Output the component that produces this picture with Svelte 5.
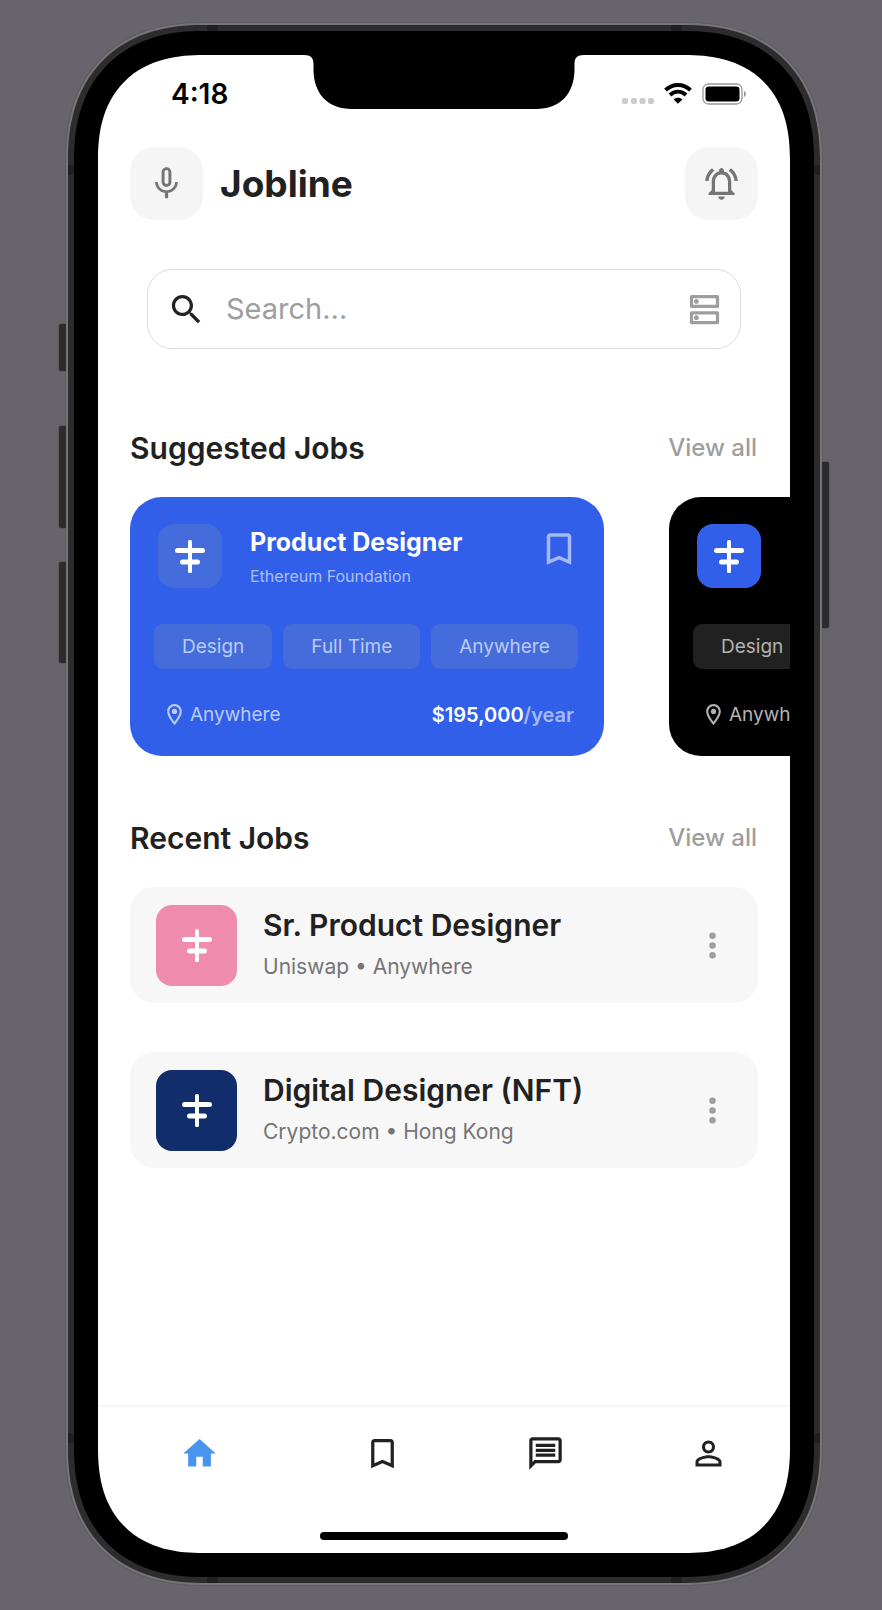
<script>
  const suggested = [
    { title: 'Product Designer', company: 'Ethereum Foundation', tags: ['Design', 'Full Time', 'Anywhere'], place: 'Anywhere', pay: '$195,000', theme: 'blue' },
    { title: 'Product Designer', company: 'Ethereum Foundation', tags: ['Design', 'Full Time', 'Anywhere'], place: 'Anywhere', pay: '$195,000', theme: 'black' }
  ];
  const recent = [
    { title: 'Sr. Product Designer', company: 'Uniswap', place: 'Anywhere', theme: 'pink' },
    { title: 'Digital Designer (NFT)', company: 'Crypto.com', place: 'Hong Kong', theme: 'navy' }
  ];
  const bookmark = 'M17 3H7c-1.1 0-1.99.9-1.99 2L5 21l7-3 7 3V5c0-1.1-.9-2-2-2zm0 15l-5-2.18L7 18V5h10v13z';
  const tabs = [
    { name: 'Home', d: 'M10 20v-6h4v6h5v-8h3L12 3 2 12h3v8z', active: true },
    { name: 'Saved', d: bookmark },
    { name: 'Messages', d: 'M4 4h16v12H5.17L4 17.17V4m0-2c-1.1 0-1.99.9-1.99 2L2 22l4-4h14c1.1 0 2-.9 2-2V4c0-1.1-.9-2-2-2H4zm2 10h12v2H6v-2zm0-3h12v2H6V9zm0-3h12v2H6V6z' },
    { name: 'Profile', d: 'M12 5.9a2.1 2.1 0 1 1 0 4.2 2.1 2.1 0 0 1 0-4.2m0 9c2.97 0 6.1 1.46 6.1 2.1v1.1H5.9V17c0-.64 3.13-2.1 6.1-2.1M12 4C9.79 4 8 5.79 8 8s1.79 4 4 4 4-1.79 4-4-1.79-4-4-4zm0 9c-2.67 0-8 1.34-8 4v3h16v-3c0-2.66-5.33-4-8-4z' }
  ];
</script>

{#snippet logo()}
  <svg width="34" height="34" viewBox="0 0 34 34" fill="#fff" aria-hidden="true">
    <rect x="15" y="1" width="4" height="33" rx="1.5" />
    <rect x="2" y="9" width="30" height="5" rx="2.5" />
    <rect x="7" y="20.500" width="20" height="5" rx="2.5" />
  </svg>
{/snippet}

<div class="stage">
  <div class="phone">
    <i class="side mute"></i>
    <i class="side up"></i>
    <i class="side down"></i>
    <i class="side power"></i>
    <i class="band top-a"></i><i class="band top-b"></i>
    <i class="band bot-a"></i><i class="band bot-b"></i>
    <i class="band left-a"></i><i class="band left-b"></i>
    <i class="band right-a"></i><i class="band right-b"></i>
    <div class="bezel">
      <div class="screen">
        <svg class="notch" width="280" height="55" viewBox="0 0 280 55" aria-hidden="true">
          <path d="M0 0H280C273 0 270.500 3 270.500 9V14C270.500 39 256 54 232 54H48C24 54 9.500 39 9.500 14V9C9.500 3 7 0 0 0Z" />
        </svg>
        <div class="status">
          <time>4:18</time>
          <div class="signals">
            <svg width="32" height="22" viewBox="0 0 32 22" fill="#ccc" aria-hidden="true">
              <rect y="15" width="6" height="6" rx="2" /><rect x="9" y="15" width="6" height="6" rx="2" />
              <rect x="17.500" y="15" width="6" height="6" rx="2" /><rect x="26" y="15" width="6" height="6" rx="2" />
            </svg>
            <svg width="28" height="22" viewBox="0 0 28 22" aria-hidden="true">
              <path d="M1.500 7.200C8.500 .2 19.500 .2 26.500 7.200" fill="none" stroke="#000" stroke-width="3.900" />
              <path d="M6 12C10.500 7.500 17.500 7.500 22 12" fill="none" stroke="#000" stroke-width="3.900" />
              <path d="M14 20.800L9.600 16.400C12 14.200 16 14.200 18.400 16.400Z" />
            </svg>
            <svg width="45" height="22" viewBox="0 0 45 22" aria-hidden="true">
              <rect x="1" y="1" width="39" height="20" rx="5.500" fill="none" stroke="#999" stroke-width="1.300" />
              <rect x="3.500" y="3.500" width="34" height="15" rx="3.300" />
              <path d="M42 8C44.500 8.500 44.500 13.500 42 14Z" fill="#999" />
            </svg>
          </div>
        </div>

        <header>
          <button class="tile" aria-label="Voice">
            <svg width="39" height="39" viewBox="0 0 24 24" fill="#757575"><path d="M12 14c1.66 0 3-1.34 3-3V5c0-1.66-1.34-3-3-3S9 3.340 9 5v6c0 1.660 1.340 3 3 3zm-1.200-9.100c0-.66.54-1.200 1.200-1.200s1.200.54 1.200 1.200l-.01 6.200c0 .66-.53 1.200-1.190 1.200s-1.200-.54-1.200-1.200V4.900zm6.500 6.100c0 3-2.540 5.100-5.300 5.100S6.700 14 6.700 11H5c0 3.410 2.720 6.230 6 6.720V21h2v-3.280c3.280-.48 6-3.300 6-6.720h-1.700z" /></svg>
          </button>
          <h1>Jobline</h1>
          <button class="tile" aria-label="Notifications">
            <svg width="39" height="39" viewBox="0 0 24 24" fill="#757575"><path d="M12 22c1.100 0 2-.9 2-2h-4c0 1.100.9 2 2 2zm6-6v-5c0-3.070-1.630-5.640-4.500-6.320V4c0-.83-.67-1.500-1.500-1.500s-1.500.67-1.500 1.500v.68C7.640 5.360 6 7.920 6 11v5l-2 2v1h16v-1l-2-2zm-2 1H8v-6c0-2.480 1.510-4.500 4-4.500s4 2.020 4 4.500v6zM7.580 4.080L6.150 2.650C3.750 4.480 2.170 7.300 2.030 10.500h2c.15-2.650 1.510-4.970 3.550-6.420zm12.390 6.420h2c-.15-3.200-1.730-6.020-4.120-7.850l-1.420 1.430c2.020 1.450 3.390 3.770 3.540 6.420z" /></svg>
          </button>
        </header>

        <div class="search">
          <svg width="39" height="39" viewBox="0 0 24 24" fill="#212121" aria-hidden="true"><path d="M15.500 14h-.79l-.28-.27C15.410 12.590 16 11.110 16 9.500 16 5.910 13.090 3 9.500 3S3 5.910 3 9.500 5.910 16 9.500 16c1.610 0 3.090-.59 4.230-1.570l.27.28v.79l5 4.990L20.490 19l-4.990-5zm-6 0C7.010 14 5 11.990 5 9.500S7.010 5 9.500 5 14 7.010 14 9.500 11.990 14 9.500 14z" /></svg>
          <input type="text" placeholder="Search..." aria-label="Search jobs" />
          <button class="plain" aria-label="Filter">
            <svg width="39" height="39" viewBox="0 0 24 24" fill="#9e9e9e"><path d="M19 15v4H5v-4h14m1-2H4c-.55 0-1 .45-1 1v6c0 .55.45 1 1 1h16c.55 0 1-.45 1-1v-6c0-.55-.45-1-1-1zM7 18.500c-.82 0-1.500-.67-1.500-1.500s.68-1.500 1.500-1.500 1.500.67 1.500 1.500-.67 1.500-1.500 1.500zM19 5v4H5V5h14m1-2H4c-.55 0-1 .45-1 1v6c0 .55.45 1 1 1h16c.55 0 1-.45 1-1V4c0-.55-.45-1-1-1zM7 8.500c-.82 0-1.500-.67-1.500-1.500S6.180 5.500 7 5.500s1.500.68 1.500 1.500S7.830 8.500 7 8.500z" /></svg>
          </button>
        </div>

        <div class="heading first">
          <h2>Suggested Jobs</h2>
          <a href="#suggested">View all</a>
        </div>
        <div class="carousel" id="suggested">
          {#each suggested as job}
            <article class="card {job.theme}">
              <div class="card-head">
                <span class="logo">{@render logo()}</span>
                <div class="card-title">
                  <h3>{job.title}</h3>
                  <p>{job.company}</p>
                </div>
                <button class="plain" aria-label="Save job">
                  <svg width="42" height="42" viewBox="0 0 24 24" fill="currentColor"><path d={bookmark} /></svg>
                </button>
              </div>
              <div class="chips">
                {#each job.tags as tag}<span>{tag}</span>{/each}
              </div>
              <div class="card-foot">
                <svg width="25" height="25" viewBox="0 0 24 24" fill="currentColor" aria-hidden="true"><path d="M12 2C8.130 2 5 5.130 5 9c0 5.250 7 13 7 13s7-7.750 7-13c0-3.870-3.130-7-7-7zM7 9c0-2.760 2.240-5 5-5s5 2.240 5 5c0 2.880-2.880 7.190-5 9.880C9.920 16.210 7 11.850 7 9z" /><circle cx="12" cy="9" r="2.500" /></svg>
                <span>{job.place}</span>
                <b>{job.pay}<em>/year</em></b>
              </div>
            </article>
          {/each}
        </div>

        <div class="heading">
          <h2>Recent Jobs</h2>
          <a href="#recent">View all</a>
        </div>
        <ul class="list" id="recent">
          {#each recent as job}
            <li>
              <span class="badge {job.theme}">{@render logo()}</span>
              <div class="info">
                <h3>{job.title}</h3>
                <p>{job.company} • {job.place}</p>
              </div>
              <button class="plain" aria-label="More options">
                <svg width="39" height="39" viewBox="0 0 24 24" fill="#9e9e9e"><circle cx="12" cy="6" r="2" /><circle cx="12" cy="12" r="2" /><circle cx="12" cy="18" r="2" /></svg>
              </button>
            </li>
          {/each}
        </ul>

        <footer>
          <nav>
            {#each tabs as tab}
              <button class="plain" class:active={tab.active} aria-label={tab.name}>
                <svg width="39" height="39" viewBox="0 0 24 24" fill="currentColor"><path d={tab.d} /></svg>
              </button>
            {/each}
          </nav>
          <div class="indicator"></div>
        </footer>
      </div>
    </div>
  </div>
</div>

<style>
  :global(body) { background: #67656b; }
  * { box-sizing: border-box; }
  h1, h2, h3, p, ul { margin: 0; padding: 0; }
  svg { display: block; flex: none; }
  button { font: inherit; border: 0; padding: 0; cursor: pointer; }

  .stage {
    display: flex;
    min-height: 100vh;
    padding: 23px 60px 25px 66px;
    font-family: Inter, "Liberation Sans", sans-serif;
    color: #212121;
  }
  .phone {
    position: relative;
    flex: 1;
    min-width: 0;
    display: flex;
    padding: 6px;
    border: 2px solid #757477;
    border-radius: 116px;
    background: #2c2c2c;
    box-shadow: 0 0 0 1px #5e5c62;
  }
  .bezel {
    position: relative;
    flex: 1;
    min-width: 0;
    display: flex;
    padding: 24px;
    border-radius: 108px;
    background: #000;
  }
  .screen {
    position: relative;
    flex: 1;
    min-width: 0;
    display: flex;
    flex-direction: column;
    overflow: hidden;
    border-radius: 86px;
    background: #fff;
  }
  @supports (corner-shape: superellipse(1.3)) {
    .phone { border-radius: 137px; corner-shape: superellipse(1.2); }
    .bezel { border-radius: 129px; corner-shape: superellipse(1.2); }
    .screen { border-radius: 105px; corner-shape: superellipse(1.25); }
  }

  .side { position: absolute; width: 7px; left: -9px; background: #2c2c2c; border-radius: 2px 0 0 2px; box-shadow: 0 0 0 1px #5a595e; clip-path: inset(-2px 0 -2px -2px); }
  .mute { top: 299px; height: 47px; }
  .up { top: 401px; height: 102px; }
  .down { top: 537px; height: 101px; }
  .power { left: auto; right: -9px; top: 437px; height: 166px; border-radius: 0 2px 2px 0; clip-path: inset(-2px -2px -2px 0); }
  .band { position: absolute; background: #212121; }
  .top-a, .top-b, .bot-a, .bot-b { width: 11px; height: 6px; }
  .left-a, .left-b, .right-a, .right-b { width: 6px; height: 10px; }
  .top-a, .top-b { top: 0; }
  .bot-a, .bot-b { bottom: 0; }
  .top-a, .bot-a { left: 139px; }
  .top-b, .bot-b { right: 138px; }
  .left-a, .left-b { left: 0; }
  .right-a, .right-b { right: 0; }
  .left-a, .right-a { top: 140px; }
  .left-b, .right-b { bottom: 140px; }

  .notch { position: absolute; top: 0; left: 50%; transform: translateX(-50%); }
  .status { display: flex; align-items: center; justify-content: space-between; height: 77px; padding: 0 43px 0 73px; }
  time { font-size: 28px; font-weight: 600; line-height: 32px; color: #000; }
  .signals { display: flex; align-items: center; gap: 10px; }

  header { display: flex; align-items: center; gap: 17px; margin: 15px 32px 0; }
  .tile { display: grid; place-items: center; flex: none; width: 73px; height: 73px; border-radius: 24px; background: #f5f5f5; }
  h1 { flex: 1; font-size: 37px; line-height: 44px; font-weight: 700; }

  .search { display: flex; align-items: center; gap: 20px; height: 80px; margin: 49px 49px 0; padding: 0 16px 0 19px; border: 1px solid #dcdcdc; border-radius: 25px; }
  input { flex: 1; min-width: 0; border: 0; padding: 0; outline: 0; background: none; font: 29px/36px Inter, "Liberation Sans", sans-serif; color: #212121; }
  input::placeholder { color: #9e9e9e; opacity: 1; }
  .plain { flex: none; background: none; color: inherit; }

  .heading { display: flex; align-items: center; justify-content: space-between; margin: 64px 33px 31px 32px; }
  .first { margin-top: 81px; }
  h2 { font-size: 30px; line-height: 36px; font-weight: 600; }
  .heading a { font-size: 24px; line-height: 36px; font-weight: 500; color: #9e9e9e; text-decoration: none; }

  .carousel { display: flex; gap: 65px; padding-left: 32px; overflow-x: auto; scrollbar-width: none; }
  .card { flex: none; width: 474px; padding: 27px 24px 29px; border-radius: 32px; color: #fff; }
  .card.blue { background: #315fea; }
  .card.black { background: #000; }
  .card-head { display: flex; gap: 28px; margin-left: 4px; }
  .logo { display: grid; place-items: center; flex: none; width: 64px; height: 64px; border-radius: 16px; }
  .blue .logo, .blue .chips span { background: #446ddb; }
  .black .logo { background: #315fea; }
  .black .chips span { background: #212121; }
  .card-title { flex: 1; }
  .card-title h3 { font-size: 25px; line-height: 32px; font-weight: 700; white-space: nowrap; padding-top: 2px; }
  .card-title p { font-size: 16px; line-height: 24px; padding-top: 6px; color: #adbff7; white-space: nowrap; }
  .card-head .plain { height: 42px; margin-top: 4px; color: #a5b9f6; }
  .chips { display: flex; gap: 11px; margin-top: 36px; }
  .chips span { padding: 0 28px; border-radius: 9px; font-size: 19px; line-height: 45px; color: #bccaf3; white-space: nowrap; }
  .black .chips span, .black .card-foot { color: #b3b3b3; }
  .card-foot { display: flex; align-items: center; gap: 3px; margin-top: 33px; padding: 0 6px 0 8px; font-size: 19px; line-height: 24px; color: #bccaf7; }
  .card-foot b { margin-left: auto; font-size: 20px; font-weight: 600; color: #fff; }
  em { font-style: normal; color: #a5b9f6; }

  .list { display: flex; flex-direction: column; gap: 49px; margin: 0 32px; list-style: none; }
  li { display: flex; align-items: center; height: 116px; padding: 0 26px; border-radius: 24px; background: #f7f7f7; }
  .badge { display: grid; place-items: center; flex: none; width: 81px; height: 81px; border-radius: 16px; }
  .pink { background: #ef8bad; }
  .navy { background: #112d6b; }
  .info { flex: 1; margin-left: 26px; padding-bottom: 4px; }
  .info h3 { font-size: 30px; line-height: 40px; font-weight: 600; }
  .info p { font-size: 21px; line-height: 28px; padding-top: 8px; color: #757575; }

  footer { margin-top: auto; height: 148px; border-top: 2px solid #f7f7f7; padding-top: 27px; }
  nav { display: grid; grid-template-columns: 203fr 163fr 163fr 163fr; justify-items: center; }
  .active { color: #4894ee; }
  .indicator { width: 248px; height: 8px; margin: 59px auto 0; border-radius: 4px; background: #000; }
</style>
